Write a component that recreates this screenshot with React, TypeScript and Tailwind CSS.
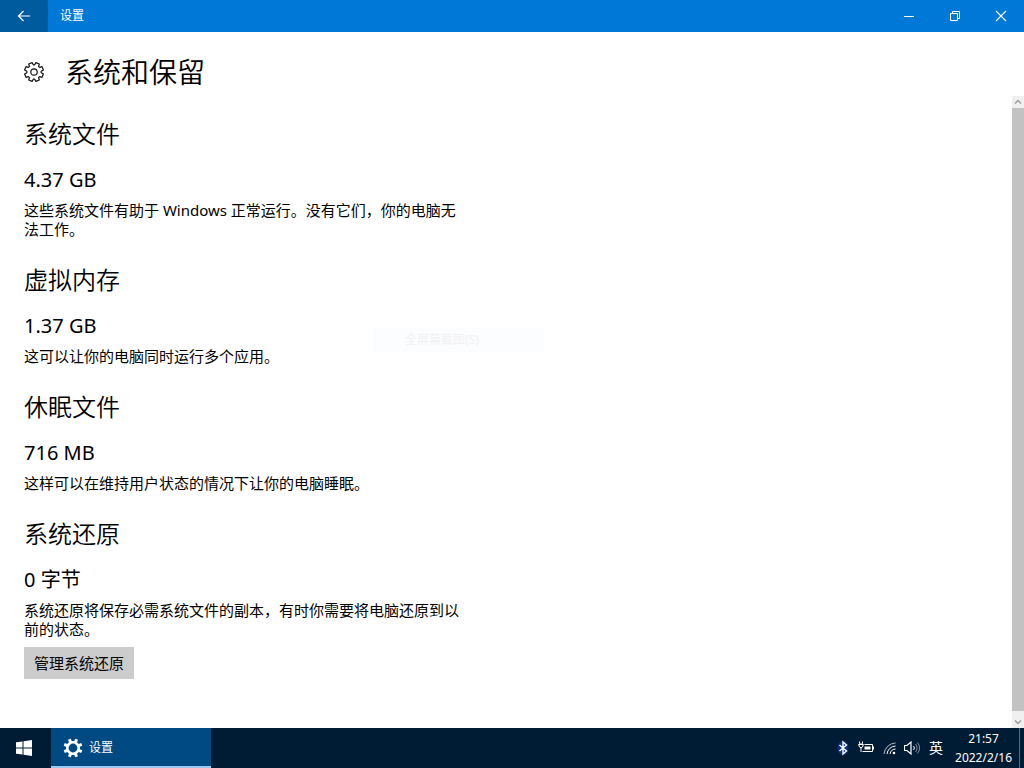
import type { ReactNode } from "react";

const FONT = "font-['Noto_Sans','Noto_Sans_CJK_SC',sans-serif]";

type StorageItem = { title: string; size: string; text: string; action?: string };

const items: StorageItem[] = [
  { title: "系统文件", size: "4.37 GB", text: "这些系统文件有助于 Windows 正常运行。没有它们，你的电脑无法工作。" },
  { title: "虚拟内存", size: "1.37 GB", text: "这可以让你的电脑同时运行多个应用。" },
  { title: "休眠文件", size: "716 MB", text: "这样可以在维持用户状态的情况下让你的电脑睡眠。" },
  {
    title: "系统还原",
    size: "0 字节",
    text: "系统还原将保存必需系统文件的副本，有时你需要将电脑还原到以前的状态。",
    action: "管理系统还原",
  },
];

// eight teeth, each one rises from the inner radius to the outer one
function gearPath(c: number, inner: number, outer: number, foot: number, tip: number) {
  const points: string[] = [];
  for (let i = 0; i < 8; i++) {
    const mid = (i * 45 + 22.5) * (Math.PI / 180);
    for (const [r, a] of [[inner, -foot], [outer, -tip], [outer, tip], [inner, foot]]) {
      const t = mid + a * (Math.PI / 180);
      points.push(`${(c + r * Math.cos(t)).toFixed(2)} ${(c + r * Math.sin(t)).toFixed(2)}`);
    }
  }
  return `M${points.join("L")}Z`;
}

function OutlineGear() {
  return (
    <svg width="22" height="22" viewBox="0 0 22 22" fill="none" stroke="#111" strokeWidth="1.2" strokeLinejoin="round">
      <path d={gearPath(11, 7.2, 9.6, 17, 11)} />
      <circle cx="11" cy="11" r="3.2" />
    </svg>
  );
}

function SolidGear() {
  return (
    <svg width="20" height="20" viewBox="0 0 20 20" fill="#fff" fillRule="evenodd">
      <path d={gearPath(10, 7, 9.6, 12, 9) + "M10 5.6a4.4 4.4 0 1 0 0 8.8a4.4 4.4 0 1 0 0-8.8Z"} />
    </svg>
  );
}

function WindowButton({ label, children }: { label: string; children: ReactNode }) {
  return (
    <button aria-label={label} className="flex h-full w-[46px] items-center justify-center hover:bg-white/10">
      <svg width="12" height="12" viewBox="0 0 12 12" fill="none" stroke="#fff">
        {children}
      </svg>
    </button>
  );
}

function TitleBar() {
  return (
    <header className="flex h-8 shrink-0 items-center bg-[#0078d7] text-white">
      <button aria-label="返回" className="flex h-full w-12 items-center justify-center bg-[#005a9e]">
        <svg width="14" height="12" viewBox="0 0 14 12" fill="none" stroke="#fff" strokeWidth="1.2">
          <path d="M13 6H1.5M6.5 1l-5 5l5 5" />
        </svg>
      </button>
      <span className="flex-1 pl-3 text-xs">设置</span>
      <WindowButton label="最小化">
        <path d="M1 6.5h10" />
      </WindowButton>
      <WindowButton label="还原">
        <path d="M1.5 3.5h7v7h-7zM3.5 3.5v-2h7v7h-2" />
      </WindowButton>
      <WindowButton label="关闭">
        <path d="M1 1l10 10M11 1L1 11" strokeWidth="1.1" />
      </WindowButton>
    </header>
  );
}

function ScrollBar() {
  return (
    <div className="flex w-3 shrink-0 flex-col bg-[#f0f0f0]">
      <button aria-label="向上滚动" className="flex h-3 items-center justify-center">
        <svg width="8" height="6" viewBox="0 0 8 6" fill="none" stroke="#999" strokeWidth="1.4">
          <path d="M1 4.5l3-3l3 3" />
        </svg>
      </button>
      <div className="flex-1 bg-[#c2c2c2]" />
      <button aria-label="向下滚动" className="flex h-[17px] items-center justify-center pt-1">
        <svg width="8" height="6" viewBox="0 0 8 6" fill="none" stroke="#999" strokeWidth="1.4">
          <path d="M1 1.5l3 3l3-3" />
        </svg>
      </button>
    </div>
  );
}

function StorageSection({ item }: { item: StorageItem }) {
  return (
    <section>
      <h2 className="text-2xl/8 font-[350]">{item.title}</h2>
      <p className="mt-4 text-xl/7">{item.size}</p>
      <p className="mt-[7px] text-[15px]/[19px]">{item.text}</p>
      {item.action && (
        <button className="mt-2 h-8 bg-[#ccc] px-[10px] text-[15px]/[19px]">{item.action}</button>
      )}
    </section>
  );
}

function Taskbar() {
  return (
    <footer className="flex h-10 shrink-0 items-stretch bg-[#001b34] text-white">
      <button aria-label="开始" className="flex w-[51px] items-center justify-center pr-1">
        <svg width="16" height="16" viewBox="0 0 16 16" fill="#fff">
          <path d="M0 2.3L6.5 1.4V7.5H0zM7.5 1.2L16 0V7.5H7.5zM0 8.5H6.5V14.6L0 13.7zM7.5 8.5H16V16L7.5 14.8z" />
        </svg>
      </button>
      <button className="flex w-40 items-center gap-[6px] border-b-2 border-[#99c9ef] bg-[#004a83] pt-[2px] pl-3 text-xs">
        <SolidGear />
        设置
      </button>
      <div className="flex flex-1 items-center justify-end">
        <div className="flex items-center gap-2">
          <svg width="14" height="18" viewBox="0 0 14 18" fill="none">
            <ellipse cx="7" cy="9" rx="5.5" ry="7.5" fill="#0a2f7a" />
            <path d="M3.5 6l7 6L7 15V3l3.5 3l-7 6" stroke="#fff" strokeWidth="1.4" />
          </svg>
          <svg width="17" height="14" viewBox="0 0 17 14" fill="none" stroke="#fff">
            <path d="M6.5 3.5h8v7h-10M15.5 5.5v3" />
            <path d="M1.5 .5v2M4.5 .5v2M.5 3.5h5M3 6v5" />
            <path d="M1 3h4v2l-1 1.5h-2l-1-1.5z" />
            <path d="M6.5 5.5h6v3h-6z" fill="#fff" stroke="none" />
          </svg>
          <svg width="13" height="14" viewBox="0 0 13 14" fill="none" stroke="#fff">
            <path d="M1 13A12 12 0 0 1 12.5 2" opacity=".7" />
            <path d="M4 13A9 9 0 0 1 12.5 5M7 13A6 6 0 0 1 12.5 8" />
            <circle cx="11" cy="12" r="1.3" fill="#fff" stroke="none" />
          </svg>
          <svg width="17" height="14" viewBox="0 0 17 14" fill="none" stroke="#fff">
            <path d="M.5 4.5h2.500l4-3.5v12l-4-3.5h-2.500z" strokeWidth="1.2" />
            <path d="M9.5 5a3 3 0 0 1 0 4" />
            <path d="M11.5 3a6 6 0 0 1 0 8M13.5 1.5a9 9 0 0 1 0 11" opacity=".5" />
          </svg>
        </div>
        <span className="ml-2 text-sm">英</span>
        <time dateTime="2022-02-16T21:57" className="ml-3 mr-[7px] text-center text-xs/[19px]">
          21:57
          <br />
          2022/2/16
        </time>
        <button aria-label="显示桌面" className="h-full w-[5px] border-l border-[#5a6c7e]" />
      </div>
    </footer>
  );
}

export default function App() {
  return (
    <div className={`relative flex h-screen flex-col bg-white text-black ${FONT}`}>
      <TitleBar />
      <div className="flex h-16 shrink-0 items-center gap-5 pt-4 pl-[23px]">
        <OutlineGear />
        <h1 className="text-[28px]/[48px] font-[350]">系统和保留</h1>
      </div>
      <div className="flex min-h-0 flex-1">
        <main className="min-w-0 flex-1 overflow-hidden pt-[22px] pl-6">
          <div className="flex max-w-[440px] flex-col gap-[25px]">
            {items.map((item) => (
              <StorageSection key={item.title} item={item} />
            ))}
          </div>
        </main>
        <ScrollBar />
      </div>
      <Taskbar />
      {/* menu entry that is fading out */}
      <div className="absolute top-[328px] left-[373px] flex h-6 w-[171px] items-center bg-[#fbfdff] pl-8 text-xs text-[#f1f1f1]">
        全屏幕截图(S)
      </div>
    </div>
  );
}
